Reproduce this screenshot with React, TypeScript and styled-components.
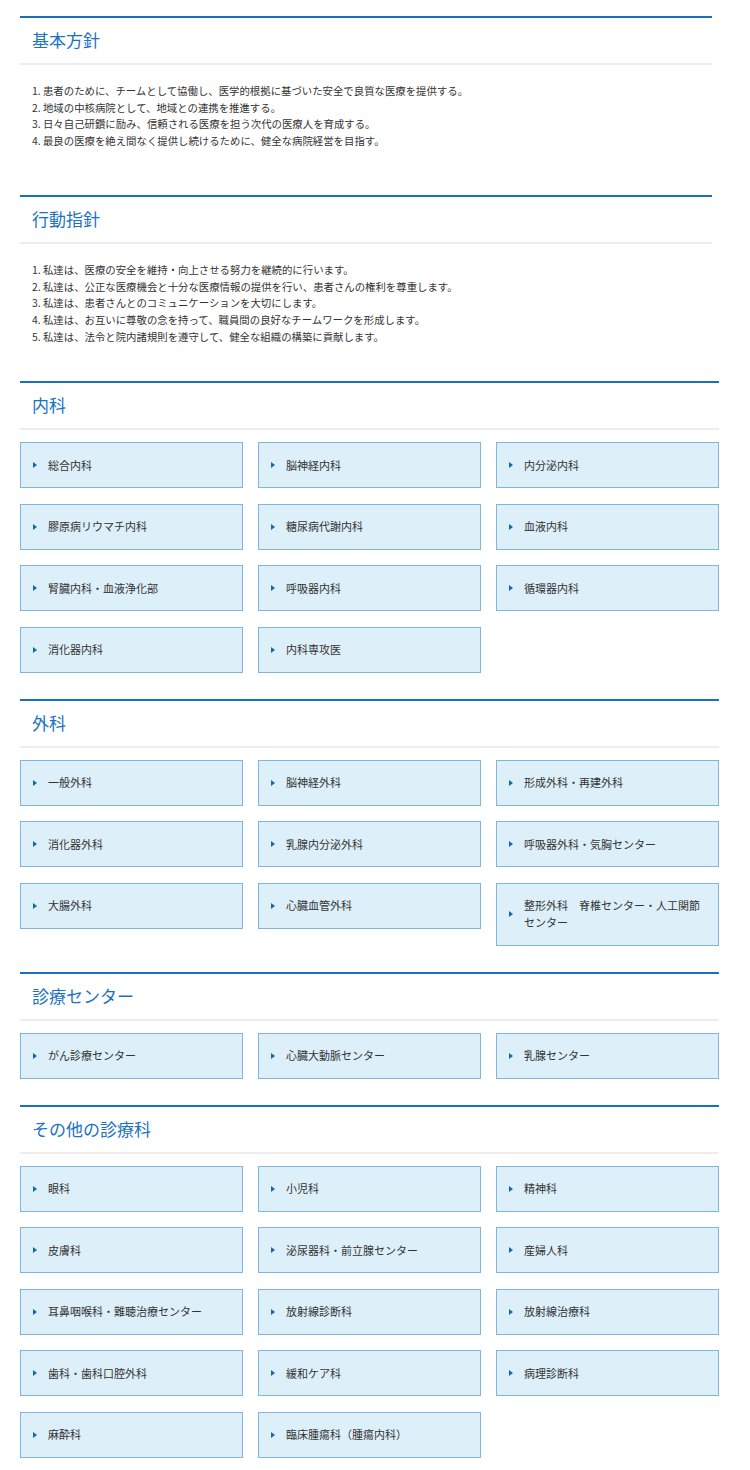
import React from 'react';
import styled, { createGlobalStyle } from 'styled-components';

const GlobalStyle = createGlobalStyle`
  html, body {
    margin: 0;
    padding: 0;
    background: #fff;
  }
  body {
    font-family: "Noto Sans CJK JP", "Noto Sans", sans-serif;
    color: #333;
  }
`;

const Page = styled.div`
  width: 750px;
  padding: 16px 31px 12px 20px;
  box-sizing: border-box;
`;

const Section = styled.section<{ $narrow?: boolean; $after: number }>`
  max-width: ${({ $narrow }) => ($narrow ? '692px' : '100%')};
  margin-bottom: ${({ $after }) => $after}px;
`;

const Heading = styled.h2`
  margin: 0;
  padding: 10px 12px 11px;
  border-top: 2px solid #1a6fbf;
  border-bottom: 2px solid #ededed;
  font-size: 17px;
  line-height: 24px;
  font-weight: 400;
  color: #1b72c2;
`;

const List = styled.ol`
  margin: 18px 0 0;
  padding: 0 0 0 12px;
  list-style: none;
  font-size: 10.4px;
  line-height: 16.7px;
  color: #333;
`;

const Item = styled.li`
  margin: 0;
`;

const Grid = styled.div`
  margin-top: 12px;
  display: grid;
  grid-template-columns: repeat(3, 223px);
  column-gap: 15px;
  row-gap: 15.5px;
  align-items: start;
`;

const Dept = styled.a`
  position: relative;
  display: block;
  box-sizing: border-box;
  padding: 13.5px 12px 13.5px 27px;
  background: #ddeff9;
  border: 1px solid #80b5de;
  font-size: 11px;
  line-height: 17px;
  color: #333;
  text-decoration: none;

  &::before {
    content: '';
    position: absolute;
    left: 12px;
    top: 50%;
    margin-top: -3px;
    border-style: solid;
    border-width: 3px 0 3px 4px;
    border-color: transparent transparent transparent #1565b8;
  }
`;

type Group = { title: string; items: string[] };

const policy = [
  '1. 患者のために、チームとして協働し、医学的根拠に基づいた安全で良質な医療を提供する。',
  '2. 地域の中核病院として、地域との連携を推進する。',
  '3. 日々自己研鑽に励み、信頼される医療を担う次代の医療人を育成する。',
  '4. 最良の医療を絶え間なく提供し続けるために、健全な病院経営を目指す。',
];

const conduct = [
  '1. 私達は、医療の安全を維持・向上させる努力を継続的に行います。',
  '2. 私達は、公正な医療機会と十分な医療情報の提供を行い、患者さんの権利を尊重します。',
  '3. 私達は、患者さんとのコミュニケーションを大切にします。',
  '4. 私達は、お互いに尊敬の念を持って、職員間の良好なチームワークを形成します。',
  '5. 私達は、法令と院内諸規則を遵守して、健全な組織の構築に貢献します。',
];

const groups: Group[] = [
  {
    title: '内科',
    items: [
      '総合内科',
      '脳神経内科',
      '内分泌内科',
      '膠原病リウマチ内科',
      '糖尿病代謝内科',
      '血液内科',
      '腎臓内科・血液浄化部',
      '呼吸器内科',
      '循環器内科',
      '消化器内科',
      '内科専攻医',
    ],
  },
  {
    title: '外科',
    items: [
      '一般外科',
      '脳神経外科',
      '形成外科・再建外科',
      '消化器外科',
      '乳腺内分泌外科',
      '呼吸器外科・気胸センター',
      '大腸外科',
      '心臓血管外科',
      '整形外科　脊椎センター・人工関節センター',
    ],
  },
  {
    title: '診療センター',
    items: ['がん診療センター', '心臓大動脈センター', '乳腺センター'],
  },
  {
    title: 'その他の診療科',
    items: [
      '眼科',
      '小児科',
      '精神科',
      '皮膚科',
      '泌尿器科・前立腺センター',
      '産婦人科',
      '耳鼻咽喉科・難聴治療センター',
      '放射線診断科',
      '放射線治療科',
      '歯科・歯科口腔外科',
      '緩和ケア科',
      '病理診断科',
      '麻酔科',
      '臨床腫瘍科（腫瘍内科）',
    ],
  },
];

const App: React.FC = () => {
  return (
    <>
      <GlobalStyle />
      <Page>
        <Section $narrow $after={45}>
          <Heading>基本方針</Heading>
          <List>
            {policy.map((p) => (
              <Item key={p}>{p}</Item>
            ))}
          </List>
        </Section>

        <Section $narrow $after={36}>
          <Heading>行動指針</Heading>
          <List>
            {conduct.map((c) => (
              <Item key={c}>{c}</Item>
            ))}
          </List>
        </Section>

        {groups.map((g) => (
          <Section key={g.title} $after={26}>
            <Heading>{g.title}</Heading>
            <Grid>
              {g.items.map((name) => (
                <Dept key={name} href="#">
                  {name}
                </Dept>
              ))}
            </Grid>
          </Section>
        ))}
      </Page>
    </>
  );
};

export default App;
